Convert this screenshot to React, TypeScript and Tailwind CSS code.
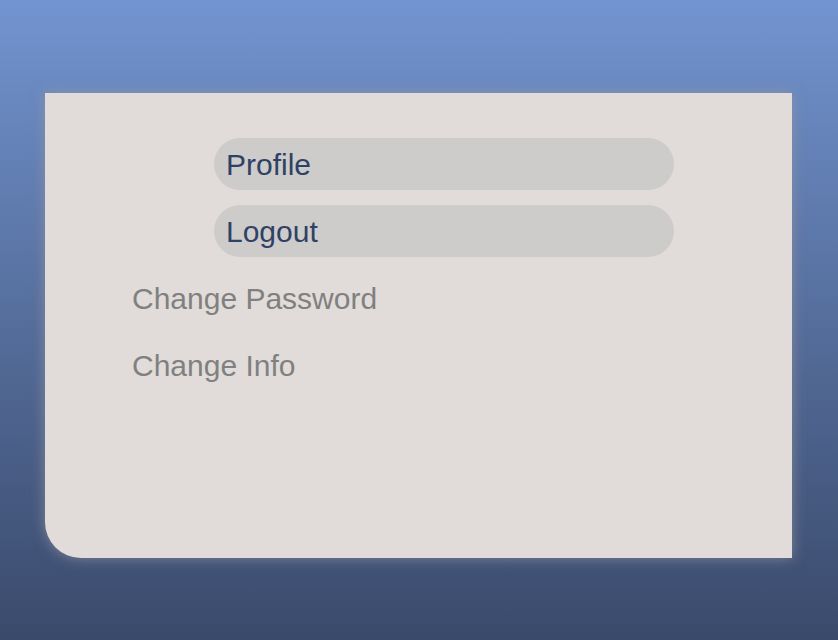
export default function App() {
  return (
    <div className="min-h-[640px] w-full bg-gradient-to-b from-[#7294d0] to-[#3a4a6b] pt-[93px] font-['Liberation_Sans',Arial,sans-serif]">
      <div className="ml-[45px] h-[465px] w-[747px] rounded-bl-[36px] bg-[#e1dcd9] pt-[45px] shadow-[0_0_14px_rgba(150,150,160,0.75)]">
        <ul className="flex flex-col gap-[15px]">
          <li className="ml-[169px] flex h-[52px] w-[460px] items-center rounded-full bg-[#cdcccb] px-3 text-[30px] text-[#2f4265]">
            Profile
          </li>
          <li className="ml-[169px] flex h-[52px] w-[460px] items-center rounded-full bg-[#cdcccb] px-3 text-[30px] text-[#2f4265]">
            Logout
          </li>
          <li className="flex h-[52px] items-center pl-[87px] text-[30px] text-[#808080]">
            Change Password
          </li>
          <li className="flex h-[52px] items-center pl-[87px] text-[30px] text-[#808080]">
            Change Info
          </li>
        </ul>
      </div>
    </div>
  );
}
